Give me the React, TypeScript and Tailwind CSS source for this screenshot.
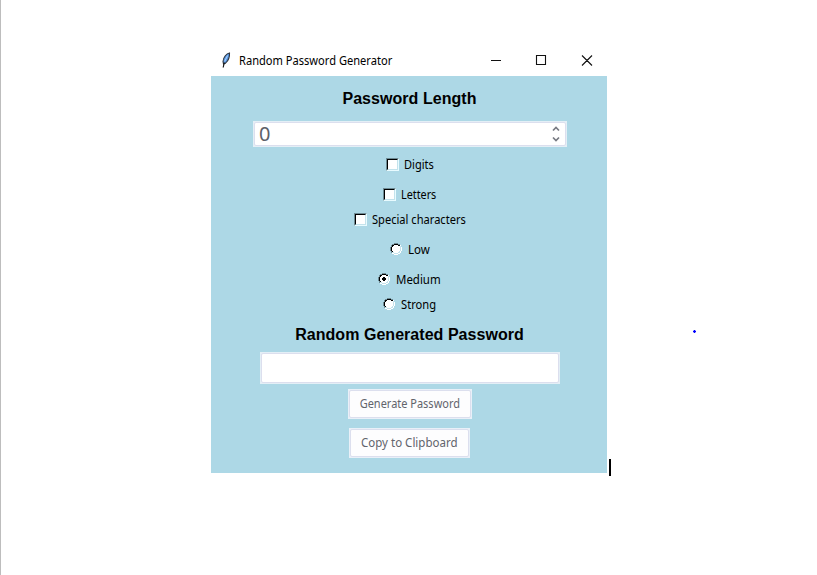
import React from "react";

const ui = "inline-block font-['Noto_Sans','Open_Sans',sans-serif] text-[12px] leading-[16px] whitespace-nowrap";

function Check({ row, label, text }: { row: string; label: string; text: string }) {
  return (
    <label className={`flex h-[15px] items-start ${row}`}>
      <span className="h-[13px] w-[13px] shrink-0 border-t border-l border-r border-b border-t-[#6e8b94] border-l-[#6e8b94] border-r-[#e8fbff] border-b-[#e8fbff]">
        <span className="block h-[11px] w-[11px] border-t border-l border-r border-b border-t-black border-l-black border-r-[#c4e3ec] border-b-[#c4e3ec] bg-white" />
      </span>
      <span className={`-mt-px ml-[5px] origin-left text-black ${ui} ${text}`}>{label}</span>
    </label>
  );
}

function Radio({ row, label, text, on }: { row: string; label: string; text: string; on?: boolean }) {
  return (
    <label className={`flex h-[15px] items-start ${row}`}>
      <svg className="h-[12px] w-[12px] shrink-0" viewBox="0 0 12 12" shapeRendering="crispEdges">
        <path d="M4 0h4v1h2v1h1v2h1v4h-1v2h-1v1h-2v1h-4v-1h-2v-1h-1v-2h-1v-4h1v-2h1v-1h2z" fill="#fff" />
        <path d="M4 0h4v1h2v1h-2v-1h-4v1h-2v2h-1v4h1v2h-1v-2h-1v-4h1v-2h1v-1h2z" fill="#6e8b94" />
        <path d="M4 1h4v1h2v1h-2v-1h-4v1h-1v1h-1v4h1v1h-1v-1h-1v-4h1v-2h2z" fill="#000" />
        <path d="M10 3h1v1h0v4h-1v2h-2v1h-4v-1h-2v-1h2v1h4v-1h1v-1h1z" fill="#c4e3ec" />
        {on && <path d="M5 4h2v1h1v2h-1v1h-2v-1h-1v-2h1z" fill="#000" />}
      </svg>
      <span className={`-mt-px ml-[6px] origin-left text-black ${ui} ${text}`}>{label}</span>
    </label>
  );
}

function Button({ size, label, text }: { size: string; label: string; text: string }) {
  return (
    <div className={`bg-[#e9f0f8] p-px ${size}`}>
      <button className="flex h-full w-full items-center justify-center rounded-[2px] border border-[#dcdfee] bg-[#fdfdfe] text-[#62646c]">
        <span className={`${ui} ${text}`}>{label}</span>
      </button>
    </div>
  );
}

export default function App() {
  return (
    <div className="relative h-[575px] w-[817px] overflow-hidden border-l border-[#bdbdbd] bg-white pl-[210px] pt-[45px]">
      <div className="w-[396px]">
        <div className="flex h-[31px] items-center bg-white pl-[9px]">
          <svg className="-mt-px h-[18px] w-[12px]" viewBox="0 0 12 18">
            <path d="M9.5 2C6.5 2.5 3.4 6 3 10.5L3.5 13L5.5 12.2C8 10 9.8 6 9.5 2Z" fill="#5594e0" stroke="#30363e" strokeWidth="1.1" />
            <path d="M7.6 4.5L4.6 10.5" stroke="#a5d0ff" strokeWidth="1.1" />
            <path d="M4.2 11.5L3.2 16.5" stroke="#151515" strokeWidth="1.2" />
          </svg>
          <span className={`ml-[7px] w-[160px] origin-left scale-x-[0.925] text-black ${ui}`}>Random Password Generator</span>
          <svg className="ml-[91px] h-[11px] w-[105px]" viewBox="0 0 105 11" fill="none" stroke="#111">
            <path d="M1 5.5H11M46.5 0.5H55.5V9.5H46.5ZM92 0.5L102 10.5M102 0.5L92 10.5" strokeWidth="1.1" />
          </svg>
        </div>
        <div className="flex h-[397px] flex-col items-center bg-[#add8e6] pl-[2px] pt-[11px]">
          <h1 className="-ml-px h-[24px] font-['Liberation_Sans',Arial,sans-serif] text-[16px] leading-[24px] font-bold tracking-[0.05px] whitespace-nowrap text-black">Password Length</h1>
          <div className="mt-[10px] h-[26px] w-[314px] bg-[#e4eff6] p-px">
            <div className="flex h-full items-center justify-between rounded-[2px] border border-[#dcdfee] bg-white pr-[4px] pl-[4px]">
              <span className="font-['Noto_Sans','Open_Sans',sans-serif] text-[20px] leading-[22px] text-[#5d6068]">0</span>
              <svg className="h-[18px] w-[10px]" viewBox="0 0 10 18" fill="none" stroke="#777a82" strokeWidth="1.7">
                <path d="M2 5.5L5 2.5L8 5.5M2 12.5L5 15.5L8 12.5" />
              </svg>
            </div>
          </div>
          <Check row="mt-[11px] w-[48px]" label="Digits" text="scale-x-[0.92]" />
          <Check row="mt-[15px] w-[54px]" label="Letters" text="scale-x-[0.9]" />
          <Check row="mt-[10px] w-[112px]" label="Special characters" text="scale-x-[0.925]" />
          <Radio row="mt-[15px] w-[40px]" label="Low" text="scale-x-[0.96]" />
          <Radio row="mt-[15px] w-[64px]" label="Medium" text="scale-x-[0.955]" on />
          <Radio row="mt-[10px] w-[54px]" label="Strong" text="scale-x-[0.93]" />
          <h2 className="mt-[10px] -ml-px h-[24px] font-['Liberation_Sans',Arial,sans-serif] text-[16px] leading-[24px] font-bold tracking-[0.04px] whitespace-nowrap text-black">Random Generated Password</h2>
          <div className="mt-[5px] h-[32px] w-[300px] bg-[#e4eff6] p-px">
            <div className="h-full rounded-[2px] border border-[#dcdfee] bg-white" />
          </div>
          <Button size="mt-[5px] h-[30px] w-[124px]" label="Generate Password" text="scale-x-[0.915]" />
          <Button size="mt-[9px] -ml-px h-[30px] w-[121px]" label="Copy to Clipboard" text="scale-x-[0.96]" />
        </div>
      </div>
      <div className="absolute top-[459px] left-[608px] h-[17px] w-[2px] bg-black" />
      <svg className="absolute top-[330px] left-[692px] h-[3px] w-[3px]" viewBox="0 0 3 3">
        <rect width="3" height="3" fill="#b0b0ff" />
        <path d="M1.5 0V3M0 1.5H3" stroke="#0000ff" />
      </svg>
    </div>
  );
}
